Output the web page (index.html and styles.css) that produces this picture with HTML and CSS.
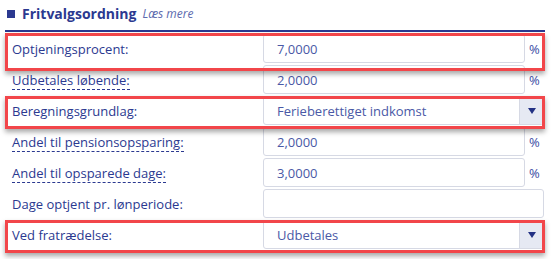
FILE: index.html
```html
<!doctype html>
<html lang="da">
<head>
	<meta charset="UTF-8">
	<title>Fritvalgsordning</title>
	<link rel="stylesheet" href="styles.css">
</head>
<body>
	<div class="panel">
		<h2 class="panel_title">
			<span class="square"></span>
			<span class="title_text">Fritvalgsordning</span>
			<a class="more">Læs mere</a>
		</h2>

		<div class="rows">
			<div class="row hl hl_first">
				<label class="lbl">Optjeningsprocent:</label>
				<input type="text" class="field" value="7,0000">
				<span class="unit">%</span>
			</div>
			<div class="row">
				<label class="lbl"><span class="tip">Udbetales løbende:</span></label>
				<input type="text" class="field" value="2,0000">
				<span class="unit">%</span>
			</div>
			<div class="row hl">
				<label class="lbl">Beregningsgrundlag:</label>
				<div class="select">
					<span class="select_text">Ferieberettiget indkomst</span>
					<span class="arrow"></span>
				</div>
			</div>
			<div class="row">
				<label class="lbl"><span class="tip">Andel til pensionsopsparing:</span></label>
				<input type="text" class="field" value="2,0000">
				<span class="unit">%</span>
			</div>
			<div class="row">
				<label class="lbl"><span class="tip">Andel til opsparede dage:</span></label>
				<input type="text" class="field" value="3,0000">
				<span class="unit">%</span>
			</div>
			<div class="row">
				<label class="lbl">Dage optjent pr. lønperiode:</label>
				<input type="text" class="field wide" value="">
			</div>
			<div class="row hl">
				<label class="lbl">Ved fratrædelse:</label>
				<div class="select">
					<span class="select_text">Udbetales</span>
					<span class="arrow"></span>
				</div>
			</div>
		</div>
	</div>
</body>
</html>
```

FILE: styles.css
```css
*{
	padding: 0;
	margin: 0;
	box-sizing: border-box;
}
html,body{
	width: 100%;
	height: 100%;
	background: #FFFFFF;
}
body{
	font-family: "Open Sans", "Noto Sans", sans-serif;
	font-size: 13px;
	color: #2B3990;
}

.panel{
	width: 540px;
	margin-left: 5px;
}
.panel_title{
	display: flex;
	align-items: center;
	height: 32px;
	padding: 0 0 3px 2px;
	border-bottom: 2px solid #2B3990;
	font-size: 14px;
}
.square{
	width: 8px;
	height: 8px;
	background: #2B3990;
	margin-right: 7px;
}
.title_text{
	font-weight: 700;
	color: #2B3990;
}
.more{
	margin-left: 6px;
	font-size: 12px;
	font-style: italic;
	font-weight: 400;
	color: #5C6AAE;
}

.rows{
	margin-top: 2px;
	display: flex;
	flex-direction: column;
	gap: 2px;
}
.row{
	display: grid;
	grid-template-columns: 258px 262px 20px;
	align-items: center;
	height: 29px;
}
.lbl{
	padding-left: 7px;
	color: #2B3990;
}
.tip{
	border-bottom: 1px dashed #2B3990;
}
.field{
	height: 29px;
	width: 100%;
	border: 1px solid #D6D9E4;
	border-radius: 3px;
	padding-left: 13px;
	font-family: inherit;
	font-size: 13px;
	color: #4A59A6;
	outline: 0;
}
.field.wide{
	grid-column: 2 / 4;
	width: 281px;
}
.unit{
	padding-left: 4px;
	color: #3A4BA3;
	font-size: 13px;
}

.select{
	grid-column: 2 / 4;
	width: 281px;
	height: 29px;
	display: flex;
	align-items: stretch;
	border: 1px solid #D6D9E4;
	border-radius: 3px;
	overflow: hidden;
}
.select_text{
	flex: 1;
	display: flex;
	align-items: center;
	padding-left: 13px;
	color: #4A59A6;
}
.arrow{
	width: 24px;
	display: flex;
	align-items: center;
	justify-content: center;
	background: #E6E9F3;
	border-left: 1px solid #D6D9E4;
}
.arrow::before{
	content: "";
	border-left: 4px solid transparent;
	border-right: 4px solid transparent;
	border-top: 6px solid #233184;
}

.hl{
	position: relative;
}
.hl::after{
	content: "";
	position: absolute;
	left: 0;
	right: 0;
	top: 0;
	bottom: -4px;
	border: 3px solid #F2464A;
	box-shadow: 0 3px 5px rgba(0,0,0,0.35);
	pointer-events: none;
}
.hl_first::after{
	top: -1px;
	bottom: -8px;
}
```
